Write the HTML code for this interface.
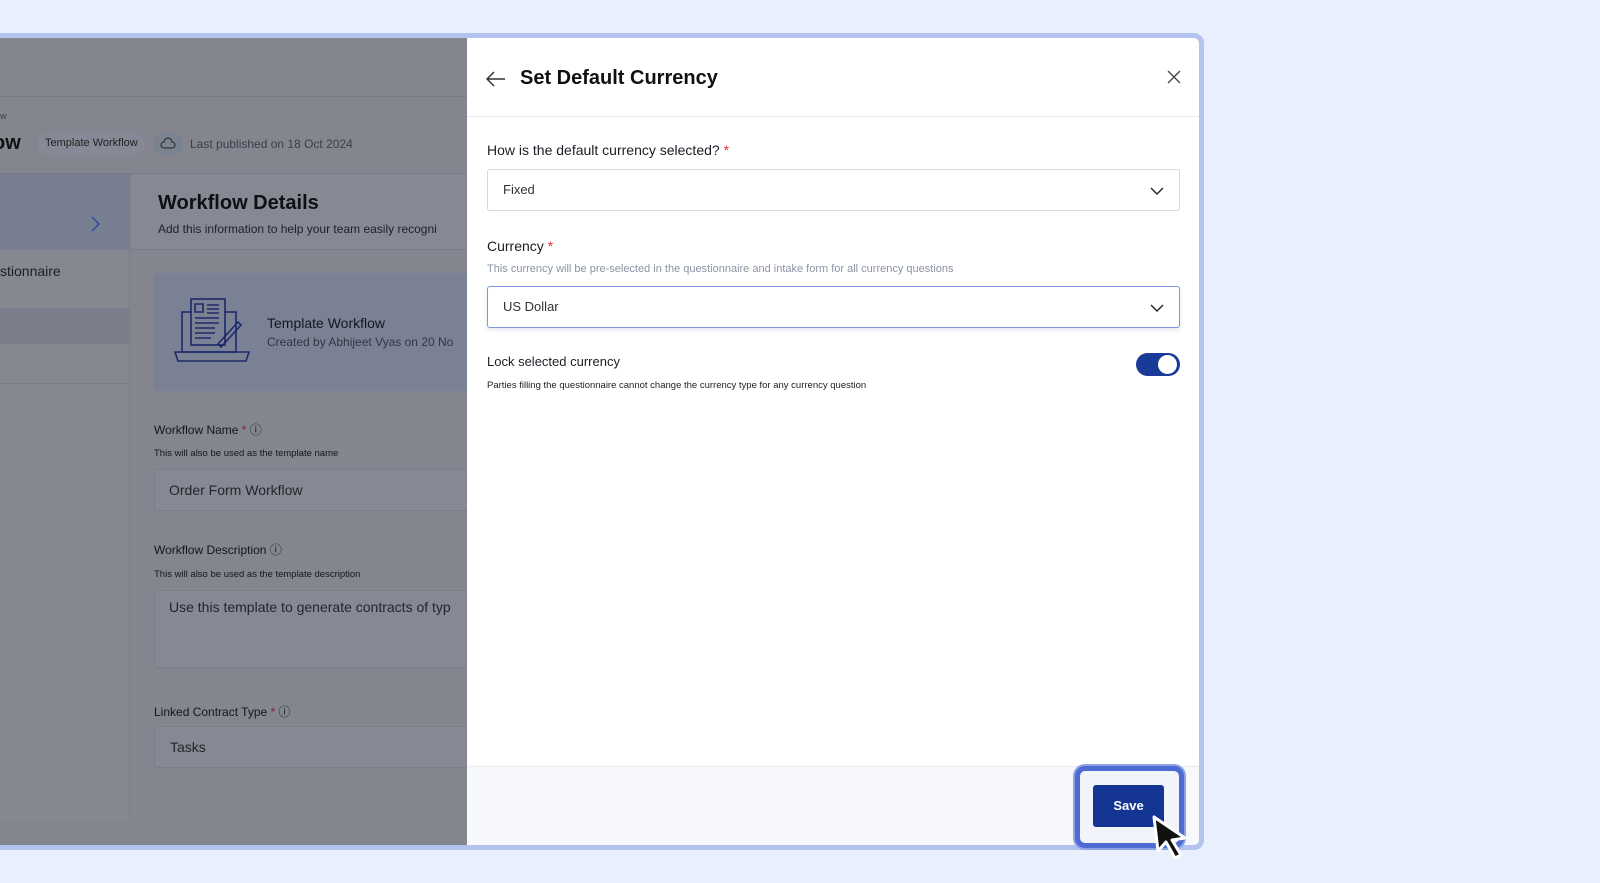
<!DOCTYPE html>
<html><head><meta charset="utf-8"><style>
*{box-sizing:border-box;margin:0;padding:0}
body{width:1600px;height:883px;overflow:hidden;background:#e9effd;font-family:"Liberation Sans",sans-serif;position:relative}
.frame{position:absolute;left:-10px;top:33px;width:1214px;height:817px;border:5px solid #b4c2f0;border-radius:0 10px 10px 0;overflow:hidden;background:#83858f}
.a{position:absolute}
.t{position:absolute;white-space:nowrap}
</style></head><body>
<div class="frame">
 <div class="a" style="left:0;top:0;width:482px;height:59px;background:#83868f;border-bottom:1px solid #777b87"></div>
 <div class="t" style="left:0px;top:73px;font-size:9px;color:#3a3d48">ow</div>
 <div class="t" style="left:-2px;top:94px;font-size:20px;font-weight:bold;color:#111">ow</div>
 <div class="a" style="left:42px;top:95px;width:108px;height:22px;border-radius:11px;background:#868a96"></div>
 <div class="t" style="left:50px;top:99px;font-size:11px;color:#222">Template Workflow</div>
 <div class="a" style="left:158px;top:95px;width:30px;height:22px;border-radius:11px;background:#7b8290"></div>
 <svg class="a" style="left:165px;top:99px" width="16" height="14" viewBox="0 0 16 14" fill="none" stroke="#333" stroke-width="1.2"><path d="M4 11a3 3 0 0 1 0-6 4 4 0 0 1 8 0 3 3 0 0 1 0 6z"/></svg>
 <div class="t" style="left:195px;top:99px;font-size:12px;color:#3c3f4a">Last published on 18 Oct 2024</div>
 <div class="a" style="left:0;top:135px;width:482px;height:1px;background:#777b87"></div>
 <div class="a" style="left:0;top:136px;width:135px;height:647px;background:#868890;border-right:1px solid #7b7e88"></div>
 <div class="a" style="left:0;top:136px;width:135px;height:76px;background:#787f90"></div>
 <svg class="a" style="left:95px;top:178px" width="10" height="16" viewBox="0 0 10 16" fill="none" stroke="#2b4a9a" stroke-width="1.5"><path d="M2 1l7 7-7 7"/></svg>
 <div class="t" style="left:5px;top:225px;font-size:14px;color:#1c1e24">stionnaire</div>
 <div class="a" style="left:0;top:270px;width:135px;height:36px;background:#7a7e8b"></div>
 <div class="a" style="left:0;top:345px;width:135px;height:1px;background:#7b7e88"></div>
 <div class="a" style="left:136px;top:136px;width:346px;height:76px;background:#868993;border-bottom:1px solid #777b87"></div>
 <div class="t" style="left:163px;top:154px;font-size:20px;font-weight:bold;color:#0f1014">Workflow Details</div>
 <div class="t" style="left:163px;top:184px;font-size:12px;color:#1e2028">Add this information to help your team easily recogni</div>
 <div class="a" style="left:159px;top:235px;width:330px;height:118px;border-radius:4px;background:#7b8195"></div>
 <svg class="a" style="left:178px;top:258px" width="78" height="68" viewBox="0 0 78 68" fill="none" stroke="#1a2a6a" stroke-width="1.6"><rect x="9" y="16" width="54" height="40"/><path d="M2 56h74l-3 9H5z"/><rect x="18" y="3" width="34" height="46" fill="#7b8195"/><path d="M22 8h8v8h-8zM34 9h12M34 13h12M34 17h12M22 22h24M22 27h24M22 32h20M22 37h20M22 42h16"/><path d="M45 48l20-22 3 3-20 22z"/></svg>
 <div class="t" style="left:272px;top:277px;font-size:14px;color:#15171d">Template Workflow</div>
 <div class="t" style="left:272px;top:297px;font-size:12px;color:#33363f">Created by Abhijeet Vyas on 20 No</div>
 <div class="t" style="left:159px;top:383px;font-size:12px;color:#15171d">Workflow Name <span style="color:#8a2030">*</span> ⓘ</div>
 <div class="t" style="left:159px;top:410px;font-size:9.5px;color:#15171d">This will also be used as the template name</div>
 <div class="a" style="left:159px;top:431px;width:340px;height:42px;border:1px solid #7a7e89;border-radius:3px;background:#868993"></div>
 <div class="t" style="left:174px;top:444px;font-size:14px;color:#23252c">Order Form Workflow</div>
 <div class="t" style="left:159px;top:503px;font-size:12px;color:#15171d">Workflow Description ⓘ</div>
 <div class="t" style="left:159px;top:531px;font-size:9.5px;color:#15171d">This will also be used as the template description</div>
 <div class="a" style="left:159px;top:552px;width:340px;height:78px;border:1px solid #7a7e89;border-radius:3px;background:#868993"></div>
 <div class="t" style="left:174px;top:561px;font-size:14px;color:#23252c">Use this template to generate contracts of typ</div>
 <div class="t" style="left:159px;top:665px;font-size:12px;color:#15171d">Linked Contract Type <span style="color:#8a2030">*</span> ⓘ</div>
 <div class="a" style="left:159px;top:688px;width:340px;height:42px;border:1px solid #7a7e89;border-radius:3px;background:#868993"></div>
 <div class="t" style="left:175px;top:701px;font-size:14px;color:#23252c">Tasks</div>

 <div class="a" style="left:472px;top:0;width:740px;height:812px;background:#fff">
  <div class="a" style="left:0;top:78px;width:740px;height:1px;background:#e6eaf2"></div>
  <svg class="a" style="left:19px;top:33px" width="20" height="16" viewBox="0 0 20 16" fill="none" stroke="#333" stroke-width="1.5"><path d="M19 8H2M8 1L1 8l7 7"/></svg>
  <div class="t" style="left:53px;top:29px;font-size:20px;font-weight:bold;color:#111">Set Default Currency</div>
  <svg class="a" style="left:700px;top:32px" width="14" height="14" viewBox="0 0 14 14" stroke="#444" stroke-width="1.3"><path d="M1 1l12 12M13 1L1 13"/></svg>
  <div class="t" style="left:20px;top:104px;font-size:14px;color:#1c1e26">How is the default currency selected? <span style="color:#e0303c">*</span></div>
  <div class="a" style="left:20px;top:131px;width:693px;height:42px;border:1px solid #d5d9e2;border-radius:3px"></div>
  <div class="t" style="left:36px;top:144px;font-size:13px;color:#333">Fixed</div>
  <svg class="a" style="left:683px;top:149px" width="14" height="9" viewBox="0 0 14 9" fill="none" stroke="#222" stroke-width="1.4"><path d="M1 1l6 6 6-6"/></svg>
  <div class="t" style="left:20px;top:200px;font-size:14px;color:#1c1e26">Currency <span style="color:#e0303c">*</span></div>
  <div class="t" style="left:20px;top:225px;font-size:11px;color:#8b93a3">This currency will be pre-selected in the questionnaire and intake form for all currency questions</div>
  <div class="a" style="left:20px;top:248px;width:693px;height:42px;border:1px solid #7d97e0;border-radius:3px;box-shadow:0 2px 4px rgba(40,60,120,.12)"></div>
  <div class="t" style="left:36px;top:261px;font-size:13px;color:#333">US Dollar</div>
  <svg class="a" style="left:683px;top:266px" width="14" height="9" viewBox="0 0 14 9" fill="none" stroke="#222" stroke-width="1.4"><path d="M1 1l6 6 6-6"/></svg>
  <div class="t" style="left:20px;top:316px;font-size:13px;color:#1c1e26">Lock selected currency</div>
  <div class="t" style="left:20px;top:342px;font-size:9.5px;color:#1c1e26">Parties filling the questionnaire cannot change the currency type for any currency question</div>
  <div class="a" style="left:669px;top:315px;width:44px;height:23px;border-radius:12px;background:#1a3a98"></div>
  <div class="a" style="left:691px;top:317px;width:19px;height:19px;border-radius:50%;background:#fff"></div>
  <div class="a" style="left:0;top:728px;width:740px;height:84px;background:#f7f8fc;border-top:1px solid #e6eaf2"></div>
 </div>
</div>
<div class="a" style="left:1075px;top:766px;width:109px;height:82px;border:5px solid #4d6bd2;border-radius:10px;background:#f2f4fc;box-shadow:0 0 0 2px #8ea2e6"></div>
<div class="a" style="left:1093px;top:785px;width:71px;height:42px;background:#143594;border-radius:3px;color:#fff;font-weight:bold;font-size:13px;text-align:center;line-height:42px">Save</div>
<svg class="a" style="left:1150px;top:814px" width="44" height="48" viewBox="0 0 44 48"><path d="M4 3l4 34 8-9 9 16 6-3-9-15 13-2z" fill="#111" stroke="#fff" stroke-width="3" stroke-linejoin="round"/></svg>
</body></html>
